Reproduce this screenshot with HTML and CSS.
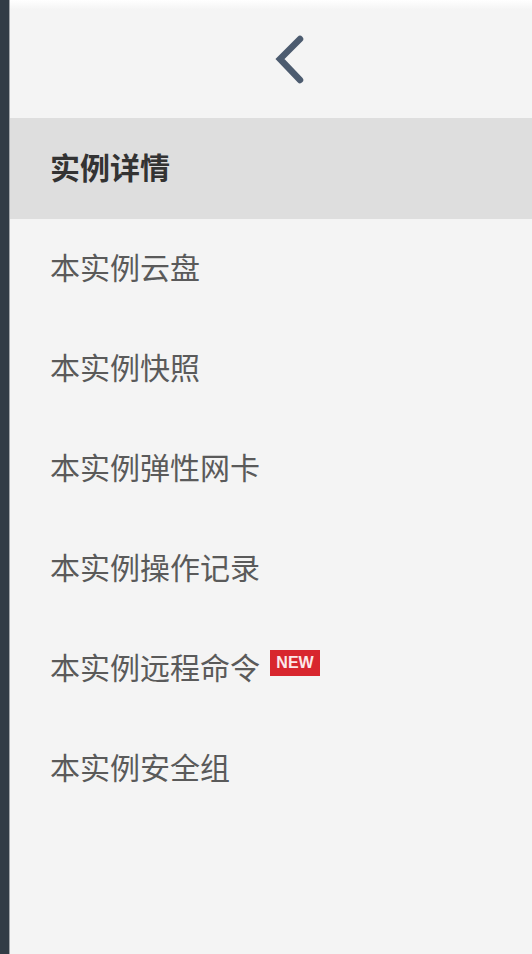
FILE: index.html
```html
<!doctype html>
<html>

<head>
    <title>实例详情</title>
    <meta charset="utf-8" />
    <meta name="viewport" content="width=device-width, initial-scale=1.0">
    <link rel="stylesheet" href="styles.css">
</head>

<body>
    <div class="layout">
        <div class="rail"></div>
        <div class="panel">
            <div class="panel-head">
                <svg class="back" width="40" height="60" viewBox="0 0 40 60">
                    <path d="M32 10 L12 30 L32 51" fill="none" stroke="#4c5b6f" stroke-width="6.5" stroke-linecap="round" stroke-linejoin="miter" />
                </svg>
            </div>
            <ul class="menu">
                <li class="item active">实例详情</li>
                <li class="item">本实例云盘</li>
                <li class="item">本实例快照</li>
                <li class="item">本实例弹性网卡</li>
                <li class="item">本实例操作记录</li>
                <li class="item">本实例远程命令<span class="badge">NEW</span></li>
                <li class="item">本实例安全组</li>
            </ul>
        </div>
    </div>
</body>

</html>
```

FILE: styles.css
```css
body { margin: 0; font-family: "Noto Sans CJK SC", "Noto Sans", sans-serif; background-color: #f4f4f4; }
.layout { display: flex; flex-direction: row; height: 954px; }
.rail { width: 9px; background-color: #323c46; border-right: 1px solid #a3a7ab; }
.panel { flex-grow: 1; background: linear-gradient(#ffffff, #f4f4f4 10px); }
.panel-head { height: 118px; display: flex; align-items: center; padding-left: 258px; }
.back { display: block; }
.menu { list-style: none; margin: 0; padding: 0; }
.item { height: 100px; box-sizing: border-box; padding-bottom: 6px; display: flex; align-items: center; padding-left: 40px; font-size: 30px; color: #5a5a5a; }
.item.active { background-color: #dedede; color: #333; font-weight: bold; height: 101px; }
.badge { margin-left: 10px; margin-bottom: 6px; width: 50px; height: 26px; display: flex; align-items: center; justify-content: center; background-color: #d8262e; color: #fbe8ea; font-family: "Liberation Sans", Arial, sans-serif; font-weight: bold; font-size: 16px; }
```
